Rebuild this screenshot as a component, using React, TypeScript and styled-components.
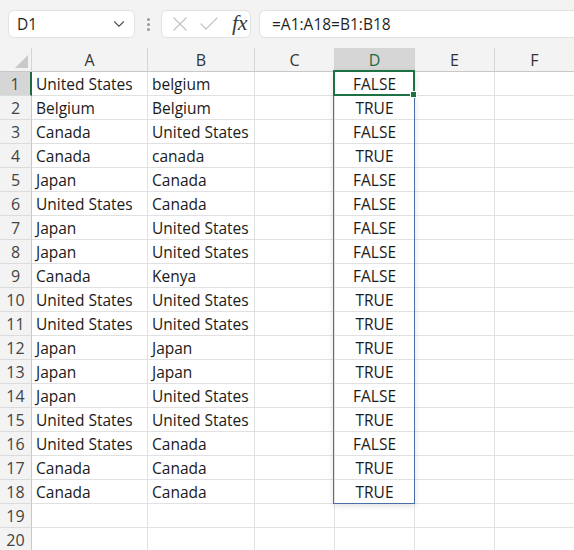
import React from 'react'
import styled, { createGlobalStyle } from 'styled-components'
import { ChevronDown, X, Check } from 'lucide-react'

const GlobalStyle = createGlobalStyle`
  html, body {
    margin: 0;
    padding: 0;
    background: #ffffff;
  }
  body {
    font-family: 'Open Sans', 'Noto Sans', sans-serif;
    color: #222;
  }
`

const COLS = [
  { name: 'A', width: 116 },
  { name: 'B', width: 107 },
  { name: 'C', width: 80 },
  { name: 'D', width: 80 },
  { name: 'E', width: 80 },
  { name: 'F', width: 80 },
]
const ROW_HEADER = 32
const ROW_H = 24

const rows: [string, string, string][] = [
  ['United States', 'belgium', 'FALSE'],
  ['Belgium', 'Belgium', 'TRUE'],
  ['Canada', 'United States', 'FALSE'],
  ['Canada', 'canada', 'TRUE'],
  ['Japan', 'Canada', 'FALSE'],
  ['United States', 'Canada', 'FALSE'],
  ['Japan', 'United States', 'FALSE'],
  ['Japan', 'United States', 'FALSE'],
  ['Canada', 'Kenya', 'FALSE'],
  ['United States', 'United States', 'TRUE'],
  ['United States', 'United States', 'TRUE'],
  ['Japan', 'Japan', 'TRUE'],
  ['Japan', 'Japan', 'TRUE'],
  ['Japan', 'United States', 'FALSE'],
  ['United States', 'United States', 'TRUE'],
  ['United States', 'Canada', 'FALSE'],
  ['Canada', 'Canada', 'TRUE'],
  ['Canada', 'Canada', 'TRUE'],
  ['', '', ''],
  ['', '', ''],
]

const Page = styled.div`
  width: 574px;
  height: 550px;
  overflow: hidden;
  background: #f3f3f3;
`

const Toolbar = styled.div`
  height: 48px;
  display: flex;
  align-items: center;
  padding: 0 0 0 8px;
  box-sizing: border-box;
`

const NameBox = styled.div`
  width: 127px;
  height: 28px;
  box-sizing: border-box;
  background: #fff;
  border: 1px solid #e3e3e3;
  border-radius: 6px;
  display: flex;
  align-items: center;
  justify-content: space-between;
  padding: 0 6px 0 8px;
  font-size: 15.5px;
  color: #1f1f1f;
`

const Dots = styled.div`
  width: 26px;
  display: flex;
  flex-direction: column;
  align-items: center;
  gap: 2px;
  span {
    width: 3px;
    height: 3px;
    border-radius: 50%;
    background: #9a9a9a;
  }
`

const FormulaButtons = styled.div`
  width: 90px;
  height: 28px;
  box-sizing: border-box;
  background: #fff;
  border: 1px solid #e3e3e3;
  border-radius: 6px;
  display: flex;
  align-items: center;
  padding: 0 3px 0 6px;
  gap: 5px;
  color: #c4c4c4;
`

const Fx = styled.span`
  font-family: 'Liberation Serif', 'DejaVu Serif', serif;
  font-style: italic;
  font-size: 22px;
  color: #3a3a3a;
  margin-left: auto;
  line-height: 1;
  margin-top: -3px;
  letter-spacing: -0.5px;
`

const FormulaInput = styled.div`
  flex: 1;
  margin-left: 8px;
  height: 28px;
  box-sizing: border-box;
  background: #fff;
  border: 1px solid #e3e3e3;
  border-right: none;
  border-radius: 6px 0 0 6px;
  display: flex;
  align-items: center;
  padding-left: 12px;
  font-size: 15.5px;
  color: #1f1f1f;
`

const Sheet = styled.div`
  position: relative;
  display: grid;
  grid-template-columns: ${ROW_HEADER}px ${COLS.map((c) => `${c.width}px`).join(' ')};
  grid-auto-rows: ${ROW_H}px;
`

const Corner = styled.div`
  position: relative;
  background: #f3f3f3;
  border-right: 1px solid #d4d4d4;
  border-bottom: 1px solid #c8c8c8;
  box-sizing: border-box;
  &::after {
    content: '';
    position: absolute;
    right: 3px;
    bottom: 3px;
    width: 0;
    height: 0;
    border-left: 13px solid transparent;
    border-bottom: 13px solid #c9c9c9;
  }
`

const ColHeader = styled.div<{ $active?: boolean }>`
  box-sizing: border-box;
  background: ${(p) => (p.$active ? '#d6d6d6' : '#f3f3f3')};
  color: ${(p) => (p.$active ? '#1e6b41' : '#333')};
  border-right: 1px solid #d4d4d4;
  border-bottom: 1px solid #c8c8c8;
  display: flex;
  align-items: center;
  justify-content: center;
  font-size: 16px;
`

const RowHeader = styled.div<{ $active?: boolean }>`
  box-sizing: border-box;
  background: ${(p) => (p.$active ? '#d6d6d6' : '#f3f3f3')};
  color: #444;
  border-right: ${(p) => (p.$active ? '2px solid #1e6b41' : '1px solid #c8c8c8')};
  border-bottom: 1px solid #dcdcdc;
  display: flex;
  align-items: center;
  justify-content: center;
  font-size: 16px;
`

const Cell = styled.div<{ $center?: boolean }>`
  box-sizing: border-box;
  background: #fff;
  border-right: 1px solid #e1e1e1;
  border-bottom: 1px solid #e1e1e1;
  display: flex;
  align-items: center;
  justify-content: ${(p) => (p.$center ? 'center' : 'flex-start')};
  padding: 0 4px;
  font-size: 15.5px;
  color: #1a1a1a;
  white-space: nowrap;
  overflow: hidden;
`

const SpillRange = styled.div`
  position: absolute;
  border: 1px solid #4a6fa8;
  box-shadow: 0 2px 6px rgba(0, 0, 0, 0.12);
  pointer-events: none;
`

const ActiveCell = styled.div`
  position: absolute;
  border: 2px solid #1e7145;
  box-sizing: border-box;
  pointer-events: none;
  &::after {
    content: '';
    position: absolute;
    right: -4px;
    bottom: -4px;
    width: 5px;
    height: 5px;
    background: #1e7145;
    border: 1px solid #fff;
  }
`

const colLeft = (i: number) => ROW_HEADER + COLS.slice(0, i).reduce((s, c) => s + c.width, 0)

export default function App() {
  const dLeft = colLeft(3)
  return (
    <Page>
      <GlobalStyle />
      <Toolbar>
        <NameBox>
          <span>D1</span>
          <ChevronDown size={18} strokeWidth={1.5} color="#555" />
        </NameBox>
        <Dots>
          <span />
          <span />
          <span />
        </Dots>
        <FormulaButtons>
          <X size={24} strokeWidth={1.2} />
          <Check size={24} strokeWidth={1.2} />
          <Fx>fx</Fx>
        </FormulaButtons>
        <FormulaInput>=A1:A18=B1:B18</FormulaInput>
      </Toolbar>
      <Sheet>
        <Corner />
        {COLS.map((c) => (
          <ColHeader key={c.name} $active={c.name === 'D'}>
            {c.name}
          </ColHeader>
        ))}
        {rows.map((r, i) => (
          <React.Fragment key={i}>
            <RowHeader $active={i === 0}>{i + 1}</RowHeader>
            <Cell>{r[0]}</Cell>
            <Cell>{r[1]}</Cell>
            <Cell />
            <Cell $center>{r[2]}</Cell>
            <Cell />
            <Cell />
          </React.Fragment>
        ))}
        <SpillRange
          style={{ left: dLeft - 2, top: ROW_H - 2, width: COLS[3].width, height: ROW_H * 18 }}
        />
        <ActiveCell
          style={{ left: dLeft - 2, top: ROW_H - 2, width: COLS[3].width + 2, height: ROW_H + 2 }}
        />
      </Sheet>
    </Page>
  )
}
